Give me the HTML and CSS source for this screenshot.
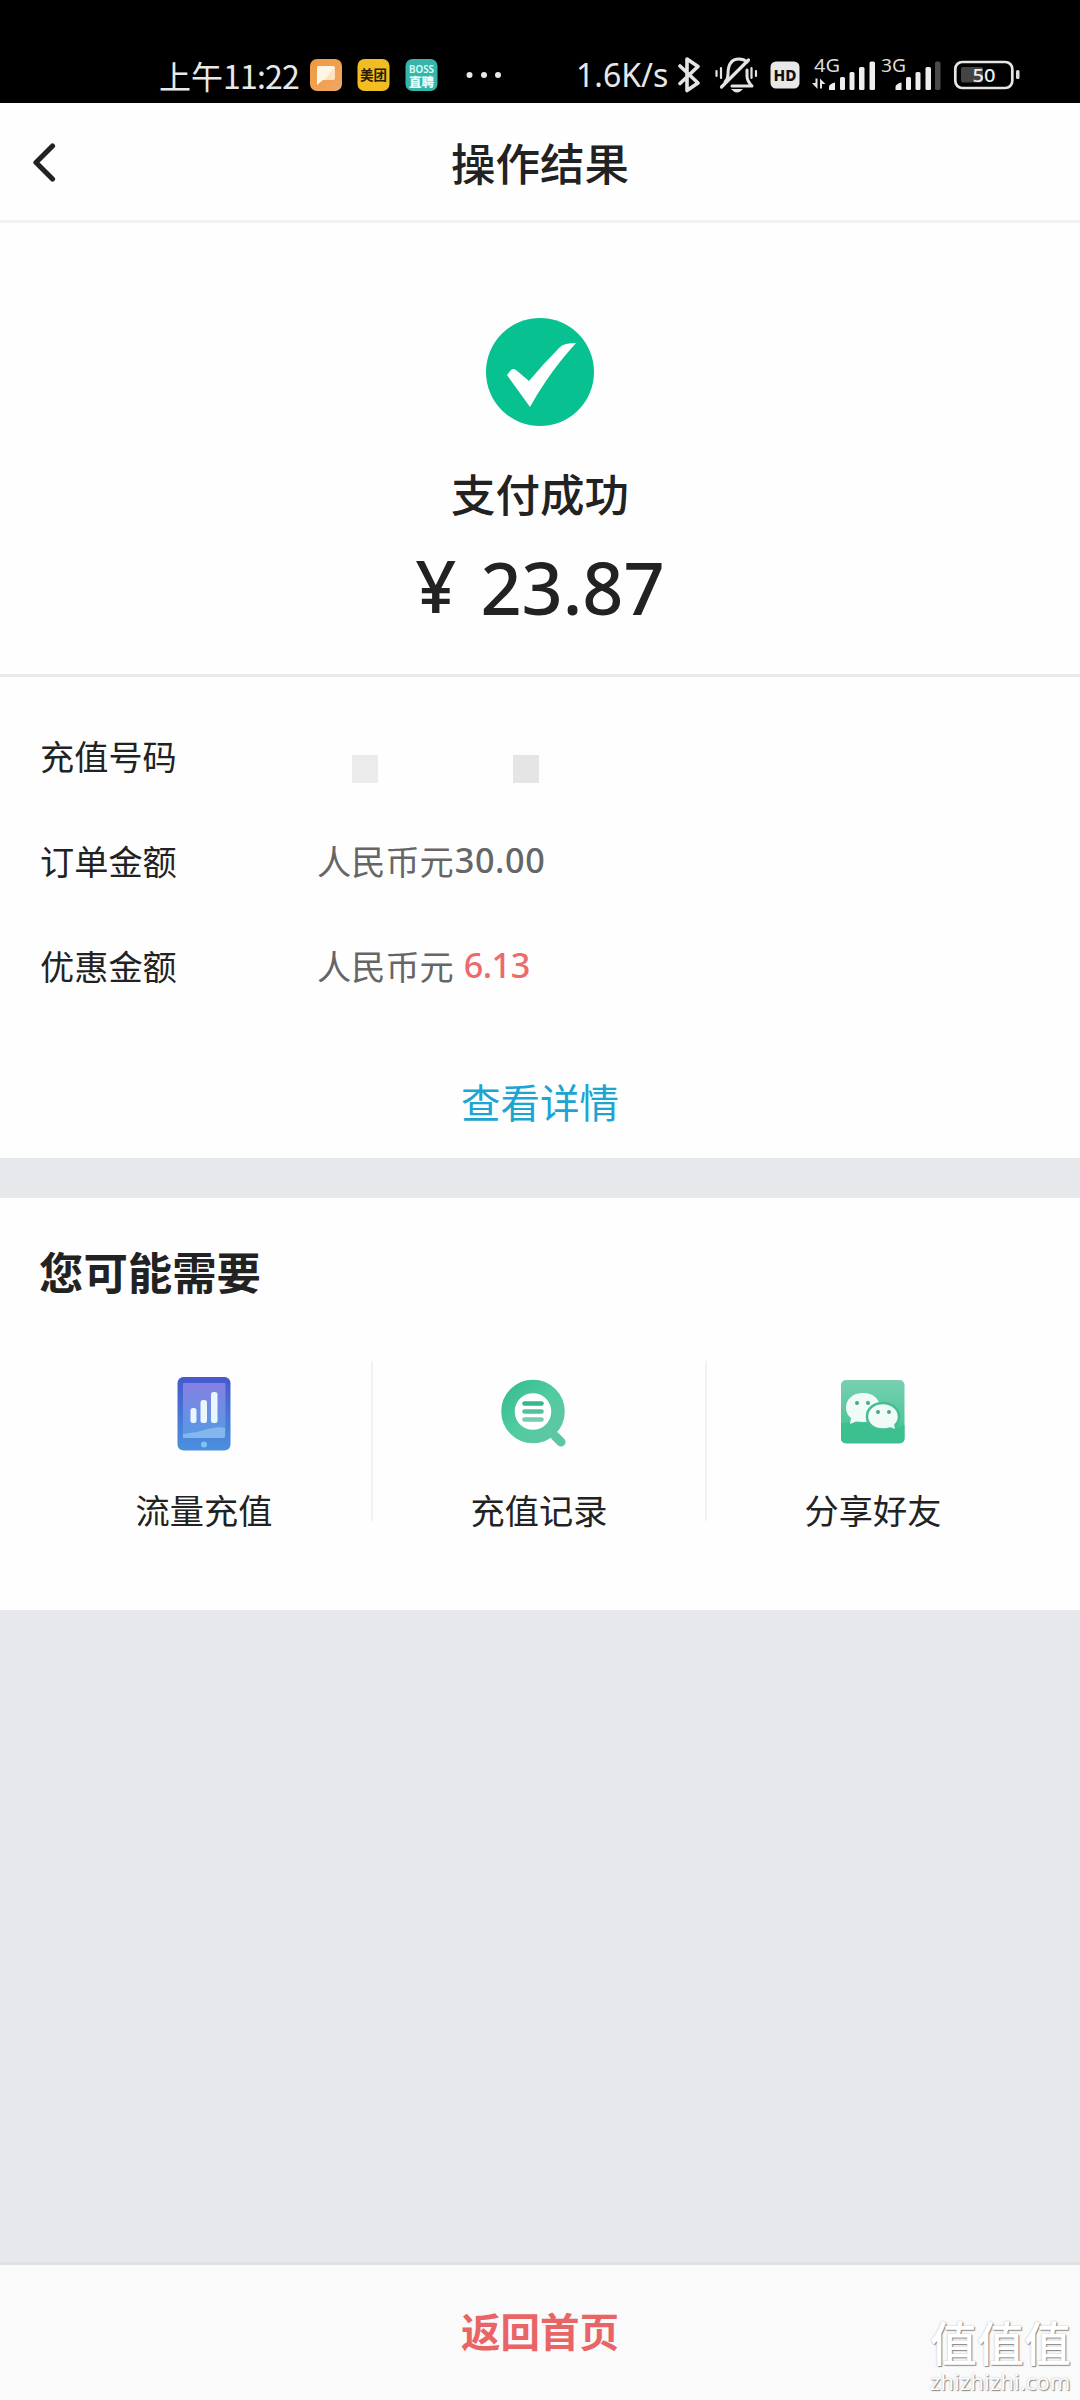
FILE: index.html
```html
<!DOCTYPE html>
<html lang="zh-CN">
<head>
<meta charset="utf-8">
<title>操作结果</title>
<link rel="stylesheet" href="styles.css">
</head>
<body>
<div class="status">
  <span class="time">上午<span class="clock">11:22</span></span>
  <svg class="apps" width="193" height="36" viewBox="308 57 193 36">
    <defs><linearGradient id="orange" x1="0" y1="0" x2="1" y2="1"><stop offset="0" stop-color="#ef9a3c"/><stop offset="1" stop-color="#f0a766"/></linearGradient></defs>
    <rect x="310" y="59" width="32" height="32" rx="7" fill="url(#orange)"/>
    <path d="M318 66h15q2 0 2 2v9q0 3-3 3h-9l-6 5V68q0-2 1-2z" fill="#fff6e8"/>
    <path d="M335 67v10q0 3-3 3h-8z" fill="#ffe3bd"/>
    <rect x="357.500" y="59" width="32" height="32" rx="7" fill="#f2bd22"/>
    <text x="360" y="80" font-size="13.500" font-weight="700" textLength="27" fill="#2b1c00">美团</text>
    <rect x="405.500" y="59" width="32" height="32" rx="7" fill="#38b5ab"/>
    <text x="409" y="72.500" font-size="10" font-weight="600" textLength="25" lengthAdjust="spacingAndGlyphs" fill="#d8fffa">BOSS</text>
    <text x="409" y="86.500" font-size="12.500" font-weight="900" textLength="25" fill="#e9fffc">直聘</text>
    <g fill="#e8e8e8"><circle cx="469.500" cy="75" r="3"/><circle cx="484" cy="75" r="3"/><circle cx="498" cy="75" r="3"/></g>
  </svg>
  <span class="speed">1.6K/s</span>
  <svg class="radios" width="344" height="40" viewBox="678 55 344 40">
    <path d="M680 66l18 17-11 7.500V59l11 7.500-18 17" fill="none" stroke="#e4e4e4" stroke-width="3.600" stroke-linejoin="round" stroke-linecap="round"/>
    <g fill="none" stroke="#e4e4e4" stroke-linecap="round" stroke-linejoin="round">
      <path d="M725 82q3-3 3-8 0-15 11-15 5 0 8 3M732 86h20q-5-5-5-10v-6" stroke-width="3"/>
      <path d="M748.500 60l-27 27" stroke-width="3.200"/>
      <path d="M716.500 71v5M721 68v10M751.500 68v10M756 71v5" stroke-width="2.200"/>
    </g>
    <path d="M731 89h12q-6 7-12 0z" fill="#e4e4e4"/>
    <rect x="770.500" y="61.500" width="29" height="27" rx="5.500" fill="#e8e8e8"/>
    <text x="773.500" y="80.500" font-size="15.500" font-weight="800" textLength="23" lengthAdjust="spacingAndGlyphs" fill="#111">HD</text>
    <text x="814" y="72" font-size="18" textLength="26" lengthAdjust="spacingAndGlyphs" fill="#ddd">4G</text>
    <path d="M812 83h3.500v-4.500h2V89zM825.500 84H822v4.500h-2V78.500z" fill="#e4e4e4"/>
    <g fill="#eee"><path d="M829 90v-3q0-3 6-4.500V90z"/><rect x="840" y="77" width="5" height="13" rx="1.500"/><rect x="849.500" y="72" width="5" height="18" rx="1.500"/><rect x="859" y="67" width="5.500" height="23" rx="1.500"/><rect x="869.500" y="61.500" width="5.500" height="28.500" rx="1.500"/></g>
    <text x="881" y="72" font-size="18" textLength="25" lengthAdjust="spacingAndGlyphs" fill="#ddd">3G</text>
    <g fill="#eee"><path d="M895.500 90v-3q0-3 6-4.500V90z"/><rect x="906" y="77" width="5" height="13" rx="1.500"/><rect x="915.500" y="72" width="5" height="18" rx="1.500"/><rect x="925.500" y="67" width="5.500" height="23" rx="1.500"/><rect x="935" y="61.500" width="5.500" height="28.500" rx="1.500" fill="#4a4a4a"/></g>
    <rect x="955.300" y="62" width="57" height="26" rx="7" fill="none" stroke="#e6e6e6" stroke-width="2.700"/>
    <rect x="961" y="67" width="22" height="15.500" rx="2" fill="#444"/>
    <text x="972.500" y="81.500" font-size="18.500" font-weight="500" textLength="23" lengthAdjust="spacingAndGlyphs" fill="#eee">50</text>
    <rect x="1016" y="70" width="3.500" height="9" rx="1.500" fill="#ddd"/>
  </svg>
</div>
<header class="nav">
  <svg class="back" width="26" height="42" viewBox="0 0 26 42"><path d="M22.500 5L6 21.500l16.500 16.500" fill="none" stroke="#222" stroke-width="5.200" stroke-linecap="round" stroke-linejoin="round"/></svg>
  <h1>操作结果</h1>
</header>
<section class="result">
  <svg width="108" height="108" viewBox="0 0 108 108"><circle cx="54" cy="54" r="54" fill="#08c191"/><path d="M21 57l4-5q2-2 5 0l13 11Q58 45 74 29q4-4 16-4Q72 45 60 63q-9 13-16 26z" fill="#fff"/></svg>
  <p class="state">支付成功</p>
  <p class="amount"><span class="yen">¥</span><span>23.87</span></p>
</section>
<section class="details">
  <dl>
    <div class="row"><dt>充值号码</dt><dd class="masked"><i></i><i></i></dd></div>
    <div class="row"><dt>订单金额</dt><dd>人民币元<span class="num">30.00</span></dd></div>
    <div class="row"><dt>优惠金额</dt><dd>人民币元<span class="num discount">6.13</span></dd></div>
  </dl>
  <a class="more">查看详情</a>
</section>
<section class="needs">
  <h2>您可能需要</h2>
  <div class="tiles">
    <div class="tile">
      <svg width="66" height="76" viewBox="0 0 66 76">
        <defs><linearGradient id="ph" x2="0" y2="1"><stop stop-color="#4559cd"/><stop offset="1" stop-color="#4b91df"/></linearGradient><linearGradient id="scr" x2="0" y2="1"><stop stop-color="#8580e2"/><stop offset="1" stop-color="#559be4"/></linearGradient></defs>
        <rect x="6.500" y="1" width="53" height="73.500" rx="6" fill="url(#ph)"/>
        <rect x="12" y="7" width="42.500" height="55" rx="1" fill="url(#scr)"/>
        <path d="M12 58q13-1 25-5 10-3 17-1v8q0 2-2 2H12z" fill="#84b8ed"/>
        <g fill="#e9f5ff"><rect x="19.500" y="32" width="6" height="15" rx="2.500"/><rect x="29.500" y="24" width="6.500" height="23" rx="2.500"/><rect x="40" y="16" width="6.500" height="31" rx="2.500"/></g>
        <circle cx="33" cy="68.500" r="3" fill="#83c2ef"/>
      </svg>
      <span>流量充值</span>
    </div>
    <div class="tile">
      <svg class="search" width="68" height="76" viewBox="0 0 68 76">
        <defs><linearGradient id="ring" x2="1" y2="1"><stop stop-color="#39bc92"/><stop offset=".5" stop-color="#50cca0"/><stop offset="1" stop-color="#5fc6a4"/></linearGradient></defs>
        <path d="M55 60l6 6" stroke="#5bc8a4" stroke-width="9" stroke-linecap="round"/>
        <circle cx="33" cy="35.500" r="25" fill="#fff" stroke="url(#ring)" stroke-width="13.500"/>
        <g stroke-width="4.600" stroke-linecap="round"><path d="M24.500 27.500h17" stroke="#36b88c"/><path d="M24.500 35.500h17" stroke="#50c49c"/><path d="M24.500 43.500h17" stroke="#75cdb0"/></g>
      </svg>
      <span>充值记录</span>
    </div>
    <div class="tile">
      <svg width="66" height="76" viewBox="0 0 66 76">
        <defs><linearGradient id="wx" x2="0" y2="1"><stop stop-color="#78d0b1"/><stop offset="1" stop-color="#3cc18e"/></linearGradient></defs>
        <rect x="1" y="4" width="63.500" height="63.500" rx="5" fill="url(#wx)"/>
        <path d="M1 47q25-3 45 5 10 2 18.500-3v13q0 5-5 5H6q-5 0-5-5z" fill="#3cc090"/>
        <path d="M23 17c10 0 17 6 17 14.500S33 46 24 46l-8-.500-6 2.500 1-6q-5-4-5-10C6 23 13 17 23 17z" fill="#f0fbf7"/>
        <path d="M43 27c9 0 16 6 16 13.500q0 5-3.500 8.500l1 6-6-2.500q-3 1-7.500 1c-9 0-16-5-16-13S34 27 43 27z" fill="#f0fbf7" stroke="#45bd94" stroke-width="2.500"/>
        <g fill="#4aa58a"><circle cx="17" cy="27" r="2"/><circle cx="28" cy="27" r="2"/><circle cx="38" cy="36" r="2"/><circle cx="49" cy="36" r="2"/></g>
      </svg>
      <span>分享好友</span>
    </div>
  </div>
</section>
<footer class="footer">
  <a>返回首页</a>
  <div class="watermark"><b>值值值</b><span>zhizhizhi.com</span></div>
</footer>
</body>
</html>
```

FILE: styles.css
```css
* { box-sizing: border-box; margin: 0; padding: 0; }
body {
  width: 1080px; height: 2400px; overflow: hidden;
  display: flex; flex-direction: column;
  background: #e7e8ec; color: #222;
  font-family: "Noto Sans CJK SC", "Noto Sans", sans-serif;
}
svg { display: block; flex: none; }
.status { height: 103px; background: #000; color: #e8e8e8; display: flex; padding: 51px 58px 0 159px; white-space: nowrap; flex: none; }
.time { width: 149px; font-size: 32px; line-height: 48px; }
.clock { letter-spacing: -0.8px; }
.apps { margin-top: 6px; }
.speed { margin-left: 77px; width: 100px; font: 32px/48px "Noto Sans", sans-serif; }
.speed { text-indent: -2px; }
.radios { margin-top: 4px; }
.status text { font-family: "Noto Sans", "Noto Sans CJK SC", sans-serif; }
.nav { height: 120px; flex: none; background: #fefefe; border-bottom: 3px solid #f0f0f0; display: grid; grid-template-columns: 1fr auto 1fr; align-items: center; padding: 0 30px; }
h1 { font-size: 44.500px; line-height: 60px; font-weight: 500; }
.result { height: 454px; flex: none; background: #fefefe; border-bottom: 3px solid #e9e9e9; display: flex; flex-direction: column; align-items: center; padding-top: 95px; }
.state { font-size: 44.500px; line-height: 60px; font-weight: 500; margin-top: 37px; }
.amount { display: flex; gap: 24px; font: 600 72px/90px "Noto Sans", sans-serif; font-weight: 550; margin-top: 19px; }
.yen { margin-top: -2px; }
.details { height: 481px; flex: none; background: #fefefe; display: flex; flex-direction: column; align-items: center; padding-top: 25px; }
dl { align-self: stretch; padding-left: 40px; }
.row { height: 105px; display: flex; align-items: center; font-size: 34.200px; line-height: 50px; }
dt { width: 277px; }
dd { color: #666; display: flex; align-items: center; }
.num { font-family: "Noto Sans", sans-serif; font-weight: 500; margin-left: 1px; letter-spacing: 0.6px; }
.discount { color: #ed6a6c; margin-left: 10px; letter-spacing: -0.5px; }
.masked { gap: 135px; padding: 28px 0 0 35px; }
.masked i { width: 26px; height: 28px; background: #ebebeb; }
.masked i + i { background: #e5e5e5; }
.more { color: #1ba5d0; font-size: 39.500px; line-height: 56px; margin-top: 56px; }
.needs { height: 412px; flex: none; margin-top: 40px; background: #fefefe; padding: 43px 39px 0; }
h2 { font-size: 44.400px; line-height: 60px; font-weight: 700; }
.tiles { display: flex; margin: 60px -1px 0 -2px; }
.tile { width: 334px; height: 160px; display: flex; flex-direction: column; align-items: center; padding-top: 15px; font-size: 34.200px; line-height: 50px; }
.tile + .tile { border-left: 2px solid #f2f2f2; }
.tile span { margin-top: 32px; }
.search { transform: translateX(-5px); }
.footer { margin-top: auto; height: 138px; flex: none; background: #fafafb; border-top: 3px solid #dfe0e4; display: grid; grid-template-columns: 1fr auto 1fr; padding: 0 7px; }
.footer a { grid-column: 2; color: #e96565; font-size: 39.500px; line-height: 56px; font-weight: 700; margin-top: 37px; }
.watermark { grid-column: 3; justify-self: end; width: 143px; color: #fff; padding-top: 49px; text-shadow: 1px 1px 1px #888, 0 0 2px #bbb; white-space: nowrap; }
.watermark b { display: block; font-size: 47px; line-height: 54px; font-weight: 500; }
.watermark span { display: block; font: 22px/26px "Open Sans", sans-serif; letter-spacing: 0.2px; }
```
